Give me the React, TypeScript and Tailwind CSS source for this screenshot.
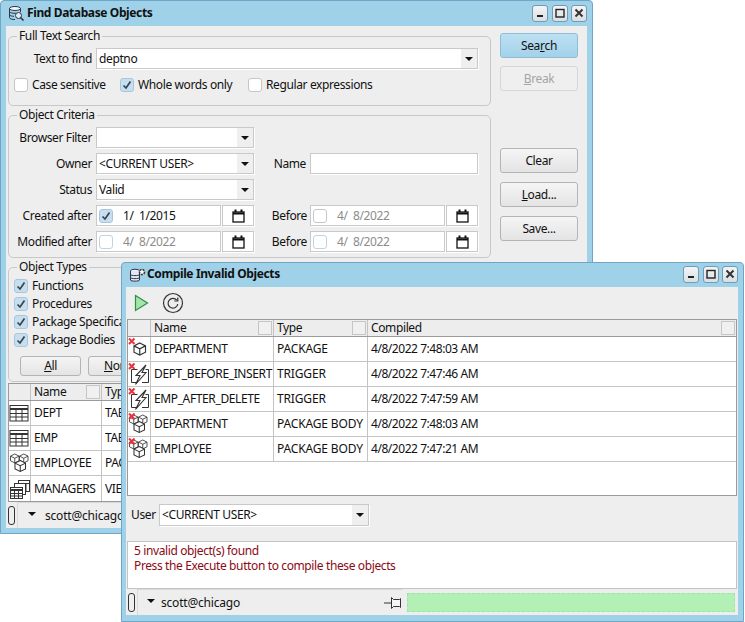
import React from "react";

const F = "font-['Noto_Sans',sans-serif] text-[12px] leading-[16px] tracking-[-0.38px] text-[#111]";

function Check({ on, faint }: { on?: boolean; faint?: boolean }) {
  return (
    <span className={`flex h-[14px] w-[14px] shrink-0 items-center justify-center rounded-[3px] border ${on ? "border-[#a9c7dc] bg-[#c5dff0]" : faint ? "border-[#bdd4e3] bg-white" : "border-[#c6c6c6] bg-white"}`}>
      {on && (
        <svg width="10" height="10" viewBox="0 0 10 10" fill="none" stroke="#3c4248" strokeWidth="1.7">
          <path d="M1.5 5.5 L4 8 L8.5 1.5" />
        </svg>
      )}
    </span>
  );
}

function Field({ className, children }: { className: string; children?: React.ReactNode }) {
  return <div className={`flex h-[21px] items-center border border-[#c9c9c9] bg-white shadow-[1px_1px_0_#fff] ${className}`}>{children}</div>;
}

function Arrow() {
  return (
    <svg width="8" height="4" viewBox="0 0 8 4" fill="#111"><path d="M0 0H8L4 4Z" /></svg>
  );
}

function Combo({ className, value }: { className: string; value?: string }) {
  return (
    <Field className={className}>
      <span className="min-w-0 flex-1 truncate pl-[2px]">{value}</span>
      <span className="flex h-full w-[16px] items-center justify-center bg-[#efefef]"><Arrow /></span>
    </Field>
  );
}

function Calendar() {
  return (
    <svg width="13" height="14" viewBox="0 0 13 14" fill="none" stroke="#111" strokeWidth="1.3">
      <rect x="1" y="3" width="11" height="10" />
      <path d="M1 4.5H12" strokeWidth="2" />
      <path d="M3.5 .5V3M9.5 .5V3" strokeWidth="2" />
    </svg>
  );
}

function DateField({ className, on, value, faint }: { className: string; on?: boolean; value: string; faint?: boolean }) {
  return (
    <div className={`flex h-[21px] ${className}`}>
      <Field className="min-w-0 flex-1 pl-[2px]">
        <Check on={on} faint={faint} />
        <span className={`ml-[10px] whitespace-pre ${on ? "" : "text-[#8c8c8c]"}`}>{value}</span>
      </Field>
      <Field className="ml-[1px] w-[32px] justify-center"><Calendar /></Field>
    </div>
  );
}

function Btn({ children, active, disabled, className = "" }: { children: React.ReactNode; active?: boolean; disabled?: boolean; className?: string }) {
  return (
    <div className={`flex h-[25px] items-center justify-center rounded-[3px] border ${active ? "border-[#8fbdd6] bg-gradient-to-b from-[#bde0f3] to-[#a3d2ea]" : disabled ? "border-[#d6d6d6] bg-[#efefef] text-[#a5a5a5]" : "border-[#b4b4b4] bg-gradient-to-b from-[#f5f5f5] to-[#e4e4e4]"} ${className}`}>
      {children}
    </div>
  );
}

function WinBtns() {
  const cls = "flex h-[17px] w-[16px] items-center justify-center rounded-[3px] border border-[#6f9db8] bg-gradient-to-b from-[#f4f4f4] to-[#d9dfe3]";
  return (
    <div className="flex">
      <span className={cls}><svg width="10" height="10" viewBox="0 0 10 10"><path d="M2 8H8" stroke="#222" strokeWidth="2" /></svg></span>
      <span className={`ml-[4px] ${cls}`}><svg width="10" height="10" viewBox="0 0 10 10" fill="none"><rect x="1" y="1.5" width="8" height="7.5" stroke="#222" strokeWidth="1.4" /></svg></span>
      <span className={`ml-[3px] ${cls}`}><svg width="10" height="10" viewBox="0 0 10 10"><path d="M1.5 1.5L8.5 8.5M8.5 1.5L1.5 8.5" stroke="#333" strokeWidth="2" /></svg></span>
    </div>
  );
}

function Group({ title, className, children }: { title: string; className: string; children: React.ReactNode }) {
  return (
    <fieldset className={`rounded-[5px] border border-[#c8c8c8] ${className}`}>
      <legend className="ml-[3px] px-[2px] leading-[16px]">{title}</legend>
      {children}
    </fieldset>
  );
}

function Cube({ x, y, s = 1 }: { x: number; y: number; s?: number }) {
  return (
    <g transform={`translate(${x} ${y}) scale(${s})`} fill="#fff" stroke="#333" strokeWidth="1">
      <path d="M5 0L10 2.5V8L5 10.5L0 8V2.5Z" />
      <path d="M0 2.5L5 5L10 2.5M5 5V10.5" fill="none" />
    </g>
  );
}

function RedX() {
  return <path d="M1 1.5L6.5 7M6.5 1.5L1 7" stroke="#e8323c" strokeWidth="2" />;
}

function ObjIcon({ kind, invalid }: { kind: string; invalid?: boolean }) {
  return (
    <svg width="22" height="24" viewBox="0 0 22 24" fill="none" className="shrink-0">
      {kind === "table" && (
        <g stroke="#333" strokeWidth="1" transform="translate(0.5 0)">
          <rect x="0.5" y="4.5" width="18" height="15.5" fill="#fff" />
          <path d="M.5 8H18.5" strokeWidth="2" />
          <path d="M.5 12.5H18.5M.5 16H18.5M6.5 8V20M12.5 8V20" />
        </g>
      )}
      {kind === "view" && (
        <g stroke="#333" strokeWidth="1">
          <rect x="9.5" y="3.5" width="11" height="11" fill="#fff" />
          <path d="M9.5 6.5H20.5M13 6.5V14.5M17 6.5V14.5" />
          <rect x="5.5" y="6.5" width="11" height="11" fill="#fff" />
          <rect x="1.5" y="10.5" width="12" height="11" fill="#fff" />
          <path d="M1.5 13H13.5" strokeWidth="2" />
          <path d="M1.5 16.5H13.5M1.5 19H13.5M5.5 13V21.5M9.5 13V21.5" />
        </g>
      )}
      {kind === "pkg" && <Cube x={6} y={6} s={1.15} />}
      {kind === "body" && (
        <g>
          <Cube x={1.5} y={3} s={0.85} />
          <Cube x={10.5} y={3} s={0.85} />
          <Cube x={6} y={9.5} s={1.05} />
        </g>
      )}
      {kind === "trig" && (
        <g stroke="#333" strokeWidth="1">
          <path d="M9.5 7.5H3.5V20.5H9.5M14 20.5H20.5V7.5H17.5" />
          <path d="M18 3L8 13.5H12L7.5 22.5L18 10.5H14Z" fill="#fff" strokeWidth="1.1" />
        </g>
      )}
      {invalid && <RedX />}
    </svg>
  );
}

function Cell({ className, children }: { className: string; children?: React.ReactNode }) {
  return <div className={`flex h-full shrink-0 items-center overflow-hidden whitespace-nowrap border-r border-[#c4c4c4] pl-[3px] ${className}`}>{children}</div>;
}

function HeadBox() {
  return <span className="ml-auto mr-[1px] h-[14px] w-[14px] shrink-0 border border-[#c6c6c6] bg-[#f0f0f0]" />;
}

function Status({ bar, gap, pin, after }: { bar: string; gap: string; pin?: React.ReactNode; after?: React.ReactNode }) {
  return (
    <div className="flex h-[26px] items-center">
      <span className="ml-[2px] h-[19px] w-[7px] shrink-0 rounded-[3px] border border-[#333] bg-[#efefef]" />
      <div className={`ml-[2px] flex h-full flex-1 items-center border-l border-t border-[#d9d9d9] ${bar}`}>
        <span className="mb-[4px]"><Arrow /></span>
        <span className={`whitespace-nowrap tracking-[-0.2px] ${gap}`}>scott@chicago</span>
        {pin}
      </div>
      {after}
    </div>
  );
}

const findRows = [
  { icon: "table", name: "DEPT", type: "TABLE" },
  { icon: "table", name: "EMP", type: "TABLE" },
  { icon: "body", name: "EMPLOYEE", type: "PACKAGE" },
  { icon: "view", name: "MANAGERS", type: "VIEW" },
];

const invalidRows = [
  { icon: "pkg", name: "DEPARTMENT", type: "PACKAGE", at: "4/8/2022 7:48:03 AM" },
  { icon: "trig", name: "DEPT_BEFORE_INSERT", type: "TRIGGER", at: "4/8/2022 7:47:46 AM" },
  { icon: "trig", name: "EMP_AFTER_DELETE", type: "TRIGGER", at: "4/8/2022 7:47:59 AM" },
  { icon: "body", name: "DEPARTMENT", type: "PACKAGE BODY", at: "4/8/2022 7:48:03 AM" },
  { icon: "body", name: "EMPLOYEE", type: "PACKAGE BODY", at: "4/8/2022 7:47:21 AM" },
];

function U({ children }: { children: React.ReactNode }) {
  return <span className="underline">{children}</span>;
}

export default function App() {
  return (
    <div className={`relative h-[622px] w-[745px] overflow-hidden bg-white ${F}`}>
      {/* Find Database Objects window */}
      <div className="absolute left-0 top-0 flex h-[534px] w-[593px] flex-col rounded-t-[4px] border border-[#6fa6c6] bg-[#9fd1e9] pb-[5px] pl-[5px] pr-[5px]">
        <div className="flex h-[25px] shrink-0 items-center pb-[1px] pl-[2px]">
          <svg width="17" height="17" viewBox="0 0 17 17" fill="none" stroke="#334" strokeWidth="1">
            <ellipse cx="7" cy="3.5" rx="5.5" ry="2" fill="#eef5fa" />
            <path d="M1.5 3.5V12.5C1.5 14 4 14.5 7 14.5M12.5 3.5V7M1.5 6.5C2 8 5 8.5 8 8.2M1.5 9.5C2 11 4 11.3 6 11.3" />
            <circle cx="10.5" cy="10.5" r="3" fill="#dfeef7" />
            <path d="M12.5 12.5L15.5 15.5" strokeWidth="1.6" />
          </svg>
          <span className="ml-[2px] font-bold">Find Database Objects</span>
          <span className="ml-auto"><WinBtns /></span>
        </div>
        <div className="flex min-h-0 flex-1 flex-col bg-[#eeeeee]">
          <div className="flex min-h-0 flex-1">
            <div className="ml-[2px] mt-[2px] flex w-[483px] shrink-0 flex-col gap-[1px]">
              <Group title="Full Text Search" className="h-[78px] px-[5px]">
                <div className="mt-[4px] flex items-center">
                  <span className="w-[81px] pr-[3px] text-right">Text to find</span>
                  <Combo className="ml-[1px] w-[382px]" value="deptno" />
                </div>
                <div className="mt-[8px] flex items-center">
                  <Check />
                  <span className="ml-[4px] w-[88px]">Case sensitive</span>
                  <Check on />
                  <span className="ml-[4px] w-[110px]">Whole words only</span>
                  <Check />
                  <span className="ml-[4px]">Regular expressions</span>
                </div>
              </Group>
              <Group title="Object Criteria" className="h-[151px] px-[5px]">
                <div className="mt-[4px] flex flex-col gap-[5px]">
                  <div className="flex items-center">
                    <span className="w-[81px] pr-[3px] text-right">Browser Filter</span>
                    <Combo className="ml-[1px] w-[158px]" />
                  </div>
                  <div className="flex items-center">
                    <span className="w-[81px] pr-[3px] text-right">Owner</span>
                    <Combo className="ml-[1px] w-[158px]" value="<CURRENT USER>" />
                    <span className="w-[56px] pr-[4px] text-right">Name</span>
                    <Field className="w-[168px]" />
                  </div>
                  <div className="flex items-center">
                    <span className="w-[81px] pr-[3px] text-right">Status</span>
                    <Combo className="ml-[1px] w-[158px]" value="Valid" />
                  </div>
                  <div className="flex items-center">
                    <span className="w-[81px] pr-[3px] text-right">Created after</span>
                    <DateField className="ml-[1px] w-[158px]" on value="1/  1/2015" />
                    <span className="w-[56px] pr-[3px] text-right">Before</span>
                    <DateField className="w-[168px]" value="4/  8/2022" />
                  </div>
                  <div className="flex items-center">
                    <span className="w-[81px] pr-[3px] text-right">Modified after</span>
                    <DateField className="ml-[1px] w-[158px]" faint value="4/  8/2022" />
                    <span className="w-[56px] pr-[3px] text-right">Before</span>
                    <DateField className="w-[168px]" faint value="4/  8/2022" />
                  </div>
                </div>
              </Group>
              <Group title="Object Types" className="h-[123px] pl-[5px]">
                <div className="mt-[2px] flex flex-col">
                  {["Functions", "Procedures", "Package Specifications", "Package Bodies"].map((t) => (
                    <div key={t} className="flex h-[18px] items-center">
                      <Check on />
                      <span className="ml-[4px]">{t}</span>
                    </div>
                  ))}
                </div>
                <div className="ml-[6px] mt-[7px] flex gap-[7px]">
                  <Btn className="h-[20px]! w-[61px]"><U>A</U>ll</Btn>
                  <Btn className="h-[20px]! w-[61px]"><U>N</U>one</Btn>
                </div>
              </Group>
            </div>
            <div className="ml-[9px] flex w-[78px] shrink-0 flex-col pt-[7px]">
              <Btn active>Sea<U>r</U>ch</Btn>
              <Btn disabled className="mt-[8px]"><U>B</U>reak</Btn>
              <Btn className="mt-[57px]">Clear</Btn>
              <Btn className="mt-[9px]"><U>L</U>oad...</Btn>
              <Btn className="mt-[9px]">Save...</Btn>
            </div>
          </div>
          <div className="ml-[2px] mr-[4px] mt-[1px] border-y border-l border-[#9a9a9a] bg-white">
            <div className="flex h-[17px] items-center border-b border-[#9a9a9a] bg-[#ededed]">
              <Cell className="w-[22px]" />
              <Cell className="w-[71px]">Name<HeadBox /></Cell>
              <Cell className="w-[120px]">Type<HeadBox /></Cell>
            </div>
            {findRows.map((r) => (
              <div key={r.name} className="flex h-[25px] items-center border-b border-[#c4c4c4] last:border-b-0">
                <div className="flex h-full w-[22px] shrink-0 items-center border-r border-[#c4c4c4]"><ObjIcon kind={r.icon} /></div>
                <Cell className="w-[71px]">{r.name}</Cell>
                <Cell className="w-[120px]">{r.type}</Cell>
              </div>
            ))}
          </div>
          <Status bar="pl-[10px]" gap="ml-[9px]" />
        </div>
      </div>

      {/* Compile Invalid Objects window */}
      <div className="absolute left-[121px] top-[262px] flex h-[360px] w-[623px] flex-col rounded-t-[4px] border border-[#6fa6c6] bg-[#9fd1e9] pb-[6px] pl-[4px] pr-[5px]">
        <div className="flex h-[24px] shrink-0 items-center pb-[2px] pl-[3px]">
          <svg width="17" height="17" viewBox="0 0 17 17" fill="none" stroke="#334" strokeWidth="1">
            <ellipse cx="6" cy="5" rx="4.5" ry="1.8" fill="#eef5fa" />
            <path d="M1.5 5V14C1.5 15.5 10.5 15.5 10.5 14V5" fill="#dfeaf2" />
            <path d="M1.5 8.5C2 10 10 10 10.5 8.5M1.5 11.5C2 13 10 13 10.5 11.5" />
            <circle cx="13" cy="6" r="2.5" fill="#fff" strokeWidth="1.6" strokeDasharray="2 1" />
          </svg>
          <span className="ml-[1px] font-bold">Compile Invalid Objects</span>
          <span className="ml-auto"><WinBtns /></span>
        </div>
        <div className="flex min-h-0 flex-1 flex-col bg-[#eeeeee]">
          <div className="flex h-[32px] shrink-0 items-center pl-[8px]">
            <svg width="15" height="18" viewBox="0 0 15 18"><path d="M1.5 1.5L13.5 9L1.5 16.5Z" fill="#a4e6a8" stroke="#2f8f45" strokeWidth="1.2" /></svg>
            <svg className="ml-[13px]" width="22" height="22" viewBox="0 0 22 22" fill="none" stroke="#333">
              <circle cx="11" cy="11" r="9.5" strokeWidth="1.2" />
              <path d="M14.8 8.2A4.9 4.9 0 1 0 15.8 12" strokeWidth="1.2" />
              <path d="M15.8 5.5V9H12.3" strokeWidth="1.2" />
            </svg>
          </div>
          <div className="ml-[1px] mr-[1px] flex h-[177px] shrink-0 flex-col border border-[#9a9a9a] bg-white">
            <div className="flex h-[17px] shrink-0 items-center border-b border-[#9a9a9a] bg-[#ededed]">
              <Cell className="w-[23px]" />
              <Cell className="w-[123px]">Name<HeadBox /></Cell>
              <Cell className="w-[94px]">Type<HeadBox /></Cell>
              <Cell className="flex-1 border-r-0">Compiled<HeadBox /></Cell>
            </div>
            {invalidRows.map((r) => (
              <div key={r.name + r.type} className="flex h-[25px] shrink-0 items-center border-b border-[#c4c4c4]">
                <div className="flex h-full w-[23px] shrink-0 items-center border-r border-[#c4c4c4]"><ObjIcon kind={r.icon} invalid /></div>
                <Cell className="w-[123px]">{r.name}</Cell>
                <Cell className="w-[94px] tracking-[-0.15px]">{r.type}</Cell>
                <div className="pl-[3px] tracking-[-0.45px]">{r.at}</div>
              </div>
            ))}
          </div>
          <div className="mt-[8px] flex h-[22px] shrink-0 items-center pl-[5px]">
            <span className="w-[28px]">User</span>
            <Combo className="h-[22px]! w-[210px]" value="<CURRENT USER>" />
          </div>
          <div className="ml-[1px] mr-[1px] mt-[15px] h-[48px] shrink-0 border border-[#c4c4c4] bg-white px-[6px] pt-[1px] leading-[15px] text-[#8b0a14]">
            <div>5 invalid object(s) found</div>
            <div>Press the Execute button to compile these objects</div>
          </div>
          <Status
            bar="pl-[9px]"
            gap="ml-[6px]"
            pin={
              <svg className="ml-auto mr-[1px]" width="18" height="14" viewBox="0 0 18 14" fill="none" stroke="#333">
                <path d="M0 7H7" />
                <path d="M7.5 1.5L9.5 3.5H15.5L16.5 2.5V11.5L15.5 10.5H9.5L7.5 12.5Z" fill="#f6f6f6" />
              </svg>
            }
            after={<div className="ml-[4px] mr-[3px] h-[19px] w-[328px] shrink-0 border border-dashed border-[#a0e3a3] bg-[#b3f0b5]" />}
          />
        </div>
      </div>
    </div>
  );
}
